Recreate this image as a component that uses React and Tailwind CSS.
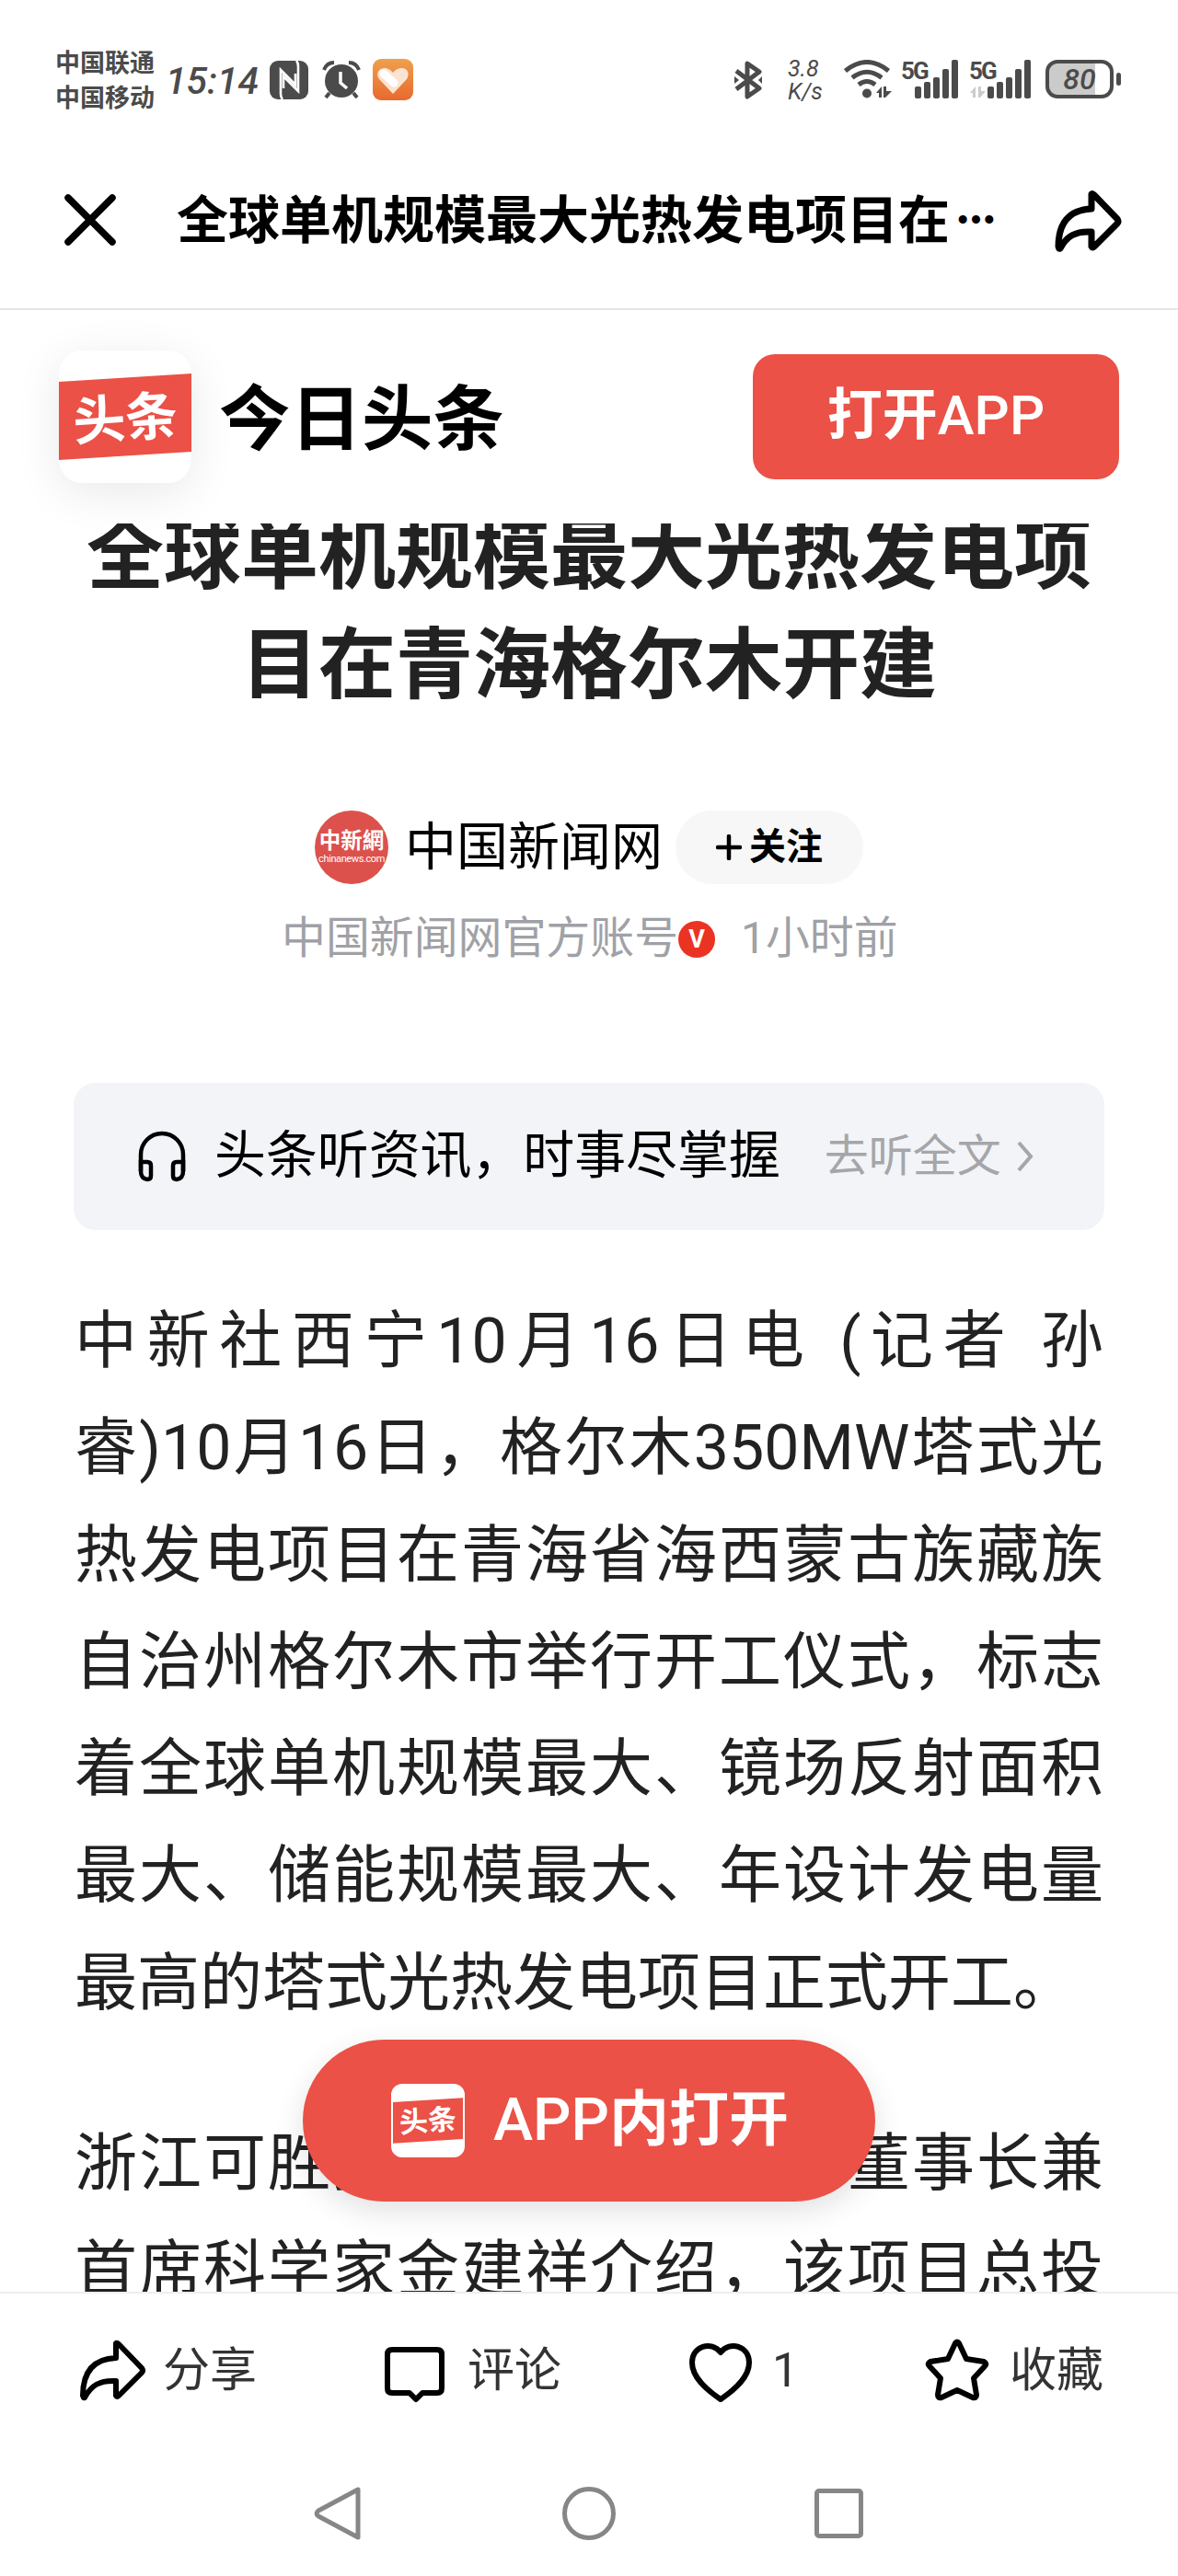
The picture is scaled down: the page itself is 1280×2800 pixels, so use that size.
import React from 'react';

const ShareIcon = ({ className, strokeWidth = 6 }) => (
  <svg viewBox="0 0 76 76" fill="none" stroke="currentColor" strokeWidth={strokeWidth} strokeLinejoin="round" className={className}>
    <path d="M41 8 Q42 7 44 9 L69 35 Q71 38 69 40 L44 65 Q42 67 41 65 V49 C23 48 14 54 7 67 C5 68 6 66 5 65 C5 40 16 25 41 24 Z" />
  </svg>
);

const SignalBars = () => (
  <svg viewBox="0 0 47 42" className="h-[42px] w-[47px]" fill="currentColor">
    <rect x="0" y="29" width="7" height="13" rx="2" />
    <rect x="10" y="24" width="7" height="18" rx="2" />
    <rect x="20" y="19" width="7" height="23" rx="2" />
    <rect x="30" y="10" width="7" height="32" rx="2" />
    <rect x="40" y="0" width="7" height="42" rx="2" />
  </svg>
);

const ToutiaoMark = ({ className, textClass }) => (
  <div className={`relative overflow-hidden bg-white ${className}`}>
    <svg viewBox="0 0 144 144" className="h-full w-full">
      <path d="M0 34 L144 25 V110 L0 119 Z" fill="#eb5146" />
    </svg>
    <span className={`absolute inset-0 flex -rotate-4 items-center justify-center font-bold text-white ${textClass}`}>头条</span>
  </div>
);

const StatusBar = () => (
  <div className="flex h-[176px] items-start pt-[64px] pl-[60px] text-[#4b4b4b]">
    <div className="-mt-[14px] w-[120px] text-[27px] leading-[38px] font-bold">
      <div>中国联通</div>
      <div>中国移动</div>
    </div>
    <div className="mt-[2px] w-[113px] text-[41px] leading-[44px] font-medium italic">15:14</div>
    <svg viewBox="0 0 42 42" className="mt-[2px] h-[42px] w-[42px]">
      <rect width="42" height="42" rx="9" fill="#4b4b4b" />
      <path d="M14 42 C12 40 12 38 12 36 V10 L28 26 V14 M29 0 C31 2 31 4 31 6 V33 L15 17 V30" fill="none" stroke="#fff" strokeWidth="2.6" />
    </svg>
    <svg viewBox="0 0 42 42" className="mt-[2px] ml-[15px] h-[42px] w-[42px]">
      <path d="M2 10 Q5 2 13 2 M40 10 Q37 2 29 2 M8 35 L4 40 M34 35 L38 40" stroke="#4b4b4b" strokeWidth="4" fill="none" />
      <circle cx="21" cy="22" r="18" fill="#4b4b4b" />
      <path d="M20 12 V24 L27 30" fill="none" stroke="#fff" strokeWidth="3.5" />
    </svg>
    <svg viewBox="0 0 44 45" className="ml-[13px] h-[45px] w-[44px]">
      <defs>
        <linearGradient id="tile" x1="0" y1="0" x2="0" y2="1">
          <stop offset="0" stopColor="#efa04c" />
          <stop offset="1" stopColor="#e8692f" />
        </linearGradient>
      </defs>
      <rect width="44" height="45" rx="9" fill="url(#tile)" />
      <path d="M22 38 L7 22 C2 15 8 9 14 10 Q19 11 22 15 Q25 11 30 10 C37 9 41 15 37 22 Z" fill="#fbe3d2" />
      <path d="M12 16 L23 26" stroke="#fff" strokeWidth="9" strokeLinecap="round" />
    </svg>

    <svg viewBox="0 0 32 42" className="mt-[2px] ml-[348px] h-[42px] w-[32px]" fill="none" stroke="#4b4b4b" strokeWidth="5" strokeLinejoin="round">
      <path d="M3 11 L28 30 L15 39 V3 L28 12 L3 31" />
      <path d="M1 17 L6 21 L1 25 Z M31 17 L27 21 L31 25 Z" fill="#4b4b4b" strokeWidth="0" />
    </svg>
    <div className="-mt-[2px] ml-[27px] w-[61px] text-[25px] leading-[25px] italic">
      <div>3.8</div>
      <div>K/s</div>
    </div>
    <svg viewBox="0 0 52 42" className="mt-px h-[42px] w-[52px]" fill="none" stroke="#4b4b4b" strokeWidth="5">
      <path d="M1.500 12 Q25 -7 48.500 12 M9 19.500 Q25 7 41 19.500 M16 27 Q25 20 34 27" />
      <circle cx="25" cy="36.500" r="5" fill="#4b4b4b" stroke="none" />
      <path d="M35 36 L41 29 V41 H38 V36 Z M43 29 H46 V34 H52 L45 41 H43 Z" fill="#4b4b4b" stroke="none" />
    </svg>
    <div className="relative mt-px ml-[25px] w-[47px]">
      <span className="absolute top-0 -left-[15px] text-[26px] leading-[24px] font-bold tracking-[-2px]">5G</span>
      <SignalBars />
    </div>
    <div className="relative mt-px ml-[32px] w-[47px]">
      <span className="absolute top-0 -left-[20px] text-[26px] leading-[24px] font-bold tracking-[-2px]">5G</span>
      <svg viewBox="0 0 17 12" className="absolute top-[29px] -left-[19px] h-[12px] w-[17px]" fill="#cbcbcb">
        <path d="M0 7 L6 0 V12 H3 V7 Z M9 0 H12 V5 H17 L11 12 H9 Z" />
      </svg>
      <SignalBars />
    </div>
    <div className="mt-px ml-[16px] flex items-center">
      <div className="flex h-[42px] w-[74px] items-center justify-center rounded-[13px] border-4 border-[#4b4b4b] bg-linear-to-r from-[#cbcbcb] from-75% to-white to-75% text-[32px] font-medium italic">80</div>
      <div className="ml-[3px] h-[14px] w-[5px] rounded-full bg-[#4b4b4b]"></div>
    </div>
  </div>
);

const TitleBar = () => (
  <div className="flex h-[161px] items-start border-b-2 border-[#e6e6e6] pt-[32px]">
    <svg viewBox="0 0 56 56" className="mt-[3px] ml-[70px] h-[56px] w-[56px]" stroke="#000" strokeWidth="7.500" strokeLinecap="round">
      <path d="M4 4 L52 52 M52 4 L4 52" />
    </svg>
    <h2 className="ml-[66px] flex w-[953px] items-center text-[56px] leading-[64px] font-bold whitespace-nowrap text-black">
      全球单机规模最大光热发电项目在<span className="ml-[7px] text-[43px] [-webkit-text-stroke:2px_#000]">⋯</span>
    </h2>
    <ShareIcon className="-mt-[5px] h-[76px] w-[76px] text-black" strokeWidth={7} />
  </div>
);

const AppBanner = () => (
  <div className="flex h-[232px] items-start pt-[44px] pl-[64px]">
    <ToutiaoMark className="h-[144px] w-[144px] rounded-[25px] shadow-[0_10px_50px_rgba(0,0,0,0.09)]" textClass="text-[57px] pt-[6px]" />
    <div className="mt-[26px] ml-[30px] w-[320px] text-[77.500px] leading-[100px] font-bold whitespace-nowrap text-black">今日头条</div>
    <button className="mt-[4px] ml-[260px] h-[136px] w-[398px] rounded-[24px] bg-[#eb5146] pb-[3px] text-[60px] font-bold text-white">
      打开<span className="font-medium">APP</span>
    </button>
  </div>
);

const firstParagraph = [
  '中新社西宁10月16日电 (记者 孙',
  '睿)10月16日，格尔木350MW塔式光',
  '热发电项目在青海省海西蒙古族藏族',
  '自治州格尔木市举行开工仪式，标志',
  '着全球单机规模最大、镜场反射面积',
  '最大、储能规模最大、年设计发电量',
];

const Article = () => (
  <article className="h-[1922px] overflow-hidden">
    <h1 className="-mt-[24px] text-center text-[84px] leading-[119px] font-bold text-[#222]">
      全球单机规模最大光热发电项
      <br />
      目在青海格尔木开建
    </h1>

    {/* Author */}
    <div className="mt-[98px] flex h-[80px] items-center pl-[342px]">
      <div className="flex h-[80px] w-[80px] flex-col items-center justify-center rounded-full bg-[#dc514c] pb-[2px] text-white">
        <span className="text-[23.500px] leading-[28px] font-bold">中新網</span>
        <span className="text-[11px] leading-[12px] tracking-[-0.4px]">chinanews.com</span>
      </div>
      <span className="ml-[18px] w-[281px] text-[56px] leading-[80px] whitespace-nowrap text-black">中国新闻网</span>
      <button className="ml-[13px] flex h-[80px] w-[204px] items-center justify-center rounded-full bg-[#f7f7f7] text-[40px] font-bold text-black">
        <svg viewBox="0 0 28 28" className="mr-[8px] h-[28px] w-[28px]" stroke="#000" strokeWidth="4.500" strokeLinecap="round">
          <path d="M14 2 V26 M2 14 H26" />
        </svg>
        关注
      </button>
    </div>
    <div className="mt-[24px] flex h-[72px] items-center pl-[306px] text-[47.900px] text-[#a0a1a6]">
      中国新闻网官方账号
      <span className="flex h-[40px] w-[40px] items-center justify-center rounded-full bg-[#eb3323] text-[27px] font-bold text-white">V</span>
      <span className="ml-[28px]">1小时前</span>
    </div>

    {/* Listen card */}
    <div className="mx-[80px] mt-[120px] flex h-[160px] items-center rounded-[24px] bg-[#f2f4f7] pl-[69px]">
      <svg viewBox="0 0 54 56" className="h-[56px] w-[54px]" fill="none" stroke="#000" strokeWidth="4.500">
        <path d="M4 44 V26 A23 23 0 0 1 50 26 V44" />
        <path d="M4 34 H11 Q15 34 15 38 V49 Q15 53 11 53 Q4 52 4 44 Z M50 34 H43 Q39 34 39 38 V49 Q39 53 43 53 Q50 52 50 44 Z" />
      </svg>
      <span className="ml-[30px] text-[55.900px] text-black">头条听资讯，时事尽掌握</span>
      <span className="ml-[48px] text-[48px] text-[#a5a6aa]">去听全文</span>
      <svg viewBox="0 0 20 34" className="ml-[16px] h-[34px] w-[20px]" fill="none" stroke="#a5a6aa" strokeWidth="4">
        <path d="M3 2 L16 17 L3 32" />
      </svg>
    </div>

    <div className="mx-[81px] mt-[63px] text-[68px] leading-[116.300px] text-[#222]">
      {firstParagraph.map((line) => (
        <p key={line} className="whitespace-nowrap [text-align-last:justify]">{line}</p>
      ))}
      <p className="whitespace-nowrap">最高的塔式光热发电项目正式开工。</p>
      <div className="mt-[80px]">
        <p className="whitespace-nowrap [text-align-last:justify]">浙江可胜技术股份有限公司董事长兼</p>
        <p className="whitespace-nowrap [text-align-last:justify]">首席科学家金建祥介绍，该项目总投</p>
      </div>
    </div>
  </article>
);

const ActionBar = () => (
  <div className="flex h-[173px] items-start border-t-2 border-[#eee] pt-[46px] text-[51px] text-[#333]">
    <div className="flex w-[330px] items-center pl-[85px]">
      <ShareIcon className="h-[76px] w-[76px] text-black" strokeWidth={6} />
      <span className="ml-[16px] leading-[76px]">分享</span>
    </div>
    <div className="flex w-[330px] items-center pl-[84px]">
      <svg viewBox="0 0 76 76" className="h-[76px] w-[76px]" fill="none" stroke="#000" strokeWidth="6" strokeLinejoin="round">
        <path d="M12 15 H61 Q66 15 66 20 V57 Q66 62 61 62 H45 L38 69 L31 62 H12 Q7 62 7 57 V20 Q7 15 12 15 Z" />
      </svg>
      <span className="ml-[18px] leading-[76px]">评论</span>
    </div>
    <div className="flex w-[340px] items-center pl-[85px]">
      <svg viewBox="0 0 76 76" className="h-[76px] w-[76px]" fill="none" stroke="#000" strokeWidth="6" strokeLinejoin="round">
        <path d="M38 69 C22 58 7 45 7 29 C7 11 28 5 38 18 C48 5 69 11 69 29 C69 45 54 58 38 69 Z" />
      </svg>
      <span className="ml-[18px] leading-[76px]">1</span>
    </div>
    <div className="flex items-center">
      <svg viewBox="0 0 76 76" className="h-[76px] w-[76px]" fill="none" stroke="#000" strokeWidth="6" strokeLinejoin="round">
        <path d="M38 8 Q40 5 42 8 L50 25 L69 28 Q73 30 70 33 L58 46 L61 64 Q61 68 57 67 L40 59 L23 67 Q19 68 19 64 L22 46 L10 33 Q7 30 11 28 L30 25 Z" />
      </svg>
      <span className="ml-[21px] leading-[76px]">收藏</span>
    </div>
  </div>
);

const SystemNav = () => (
  <div className="flex h-[136px] items-center pl-[340px] text-[#868686]">
    <svg viewBox="0 0 52 60" className="h-[60px] w-[52px]" fill="none" stroke="currentColor" strokeWidth="5" strokeLinejoin="round">
      <path d="M49 4 V56 L6 33 Q2 30 6 27 Z" />
    </svg>
    <div className="ml-[219px] h-[58px] w-[58px] rounded-full border-5 border-[#868686]"></div>
    <div className="ml-[216px] h-[54px] w-[53px] rounded-[5px] border-5 border-[#868686]"></div>
  </div>
);

const App = () => {
  return (
    <div className="relative h-[2800px] w-[1280px] overflow-hidden bg-white font-[Roboto,'Noto_Sans_CJK_SC',sans-serif]">
      <StatusBar />
      <TitleBar />
      <AppBanner />
      <Article />
      <ActionBar />
      <SystemNav />

      {/* Floating open button */}
      <button className="absolute top-[2217px] left-[329px] flex h-[176px] w-[622px] items-center rounded-full bg-[#eb5146] pl-[96px] text-[65px] font-bold text-white shadow-[0_10px_32px_rgba(0,0,0,0.12)]">
        <ToutiaoMark className="h-[80px] w-[80px] rounded-[12px] border-2 border-white" textClass="text-[31px] pt-[3px]" />
        <span className="ml-[31px] pb-[2px] leading-[80px] whitespace-nowrap"><span className="font-medium">APP</span>内打开</span>
      </button>
    </div>
  );
};

export default App;
